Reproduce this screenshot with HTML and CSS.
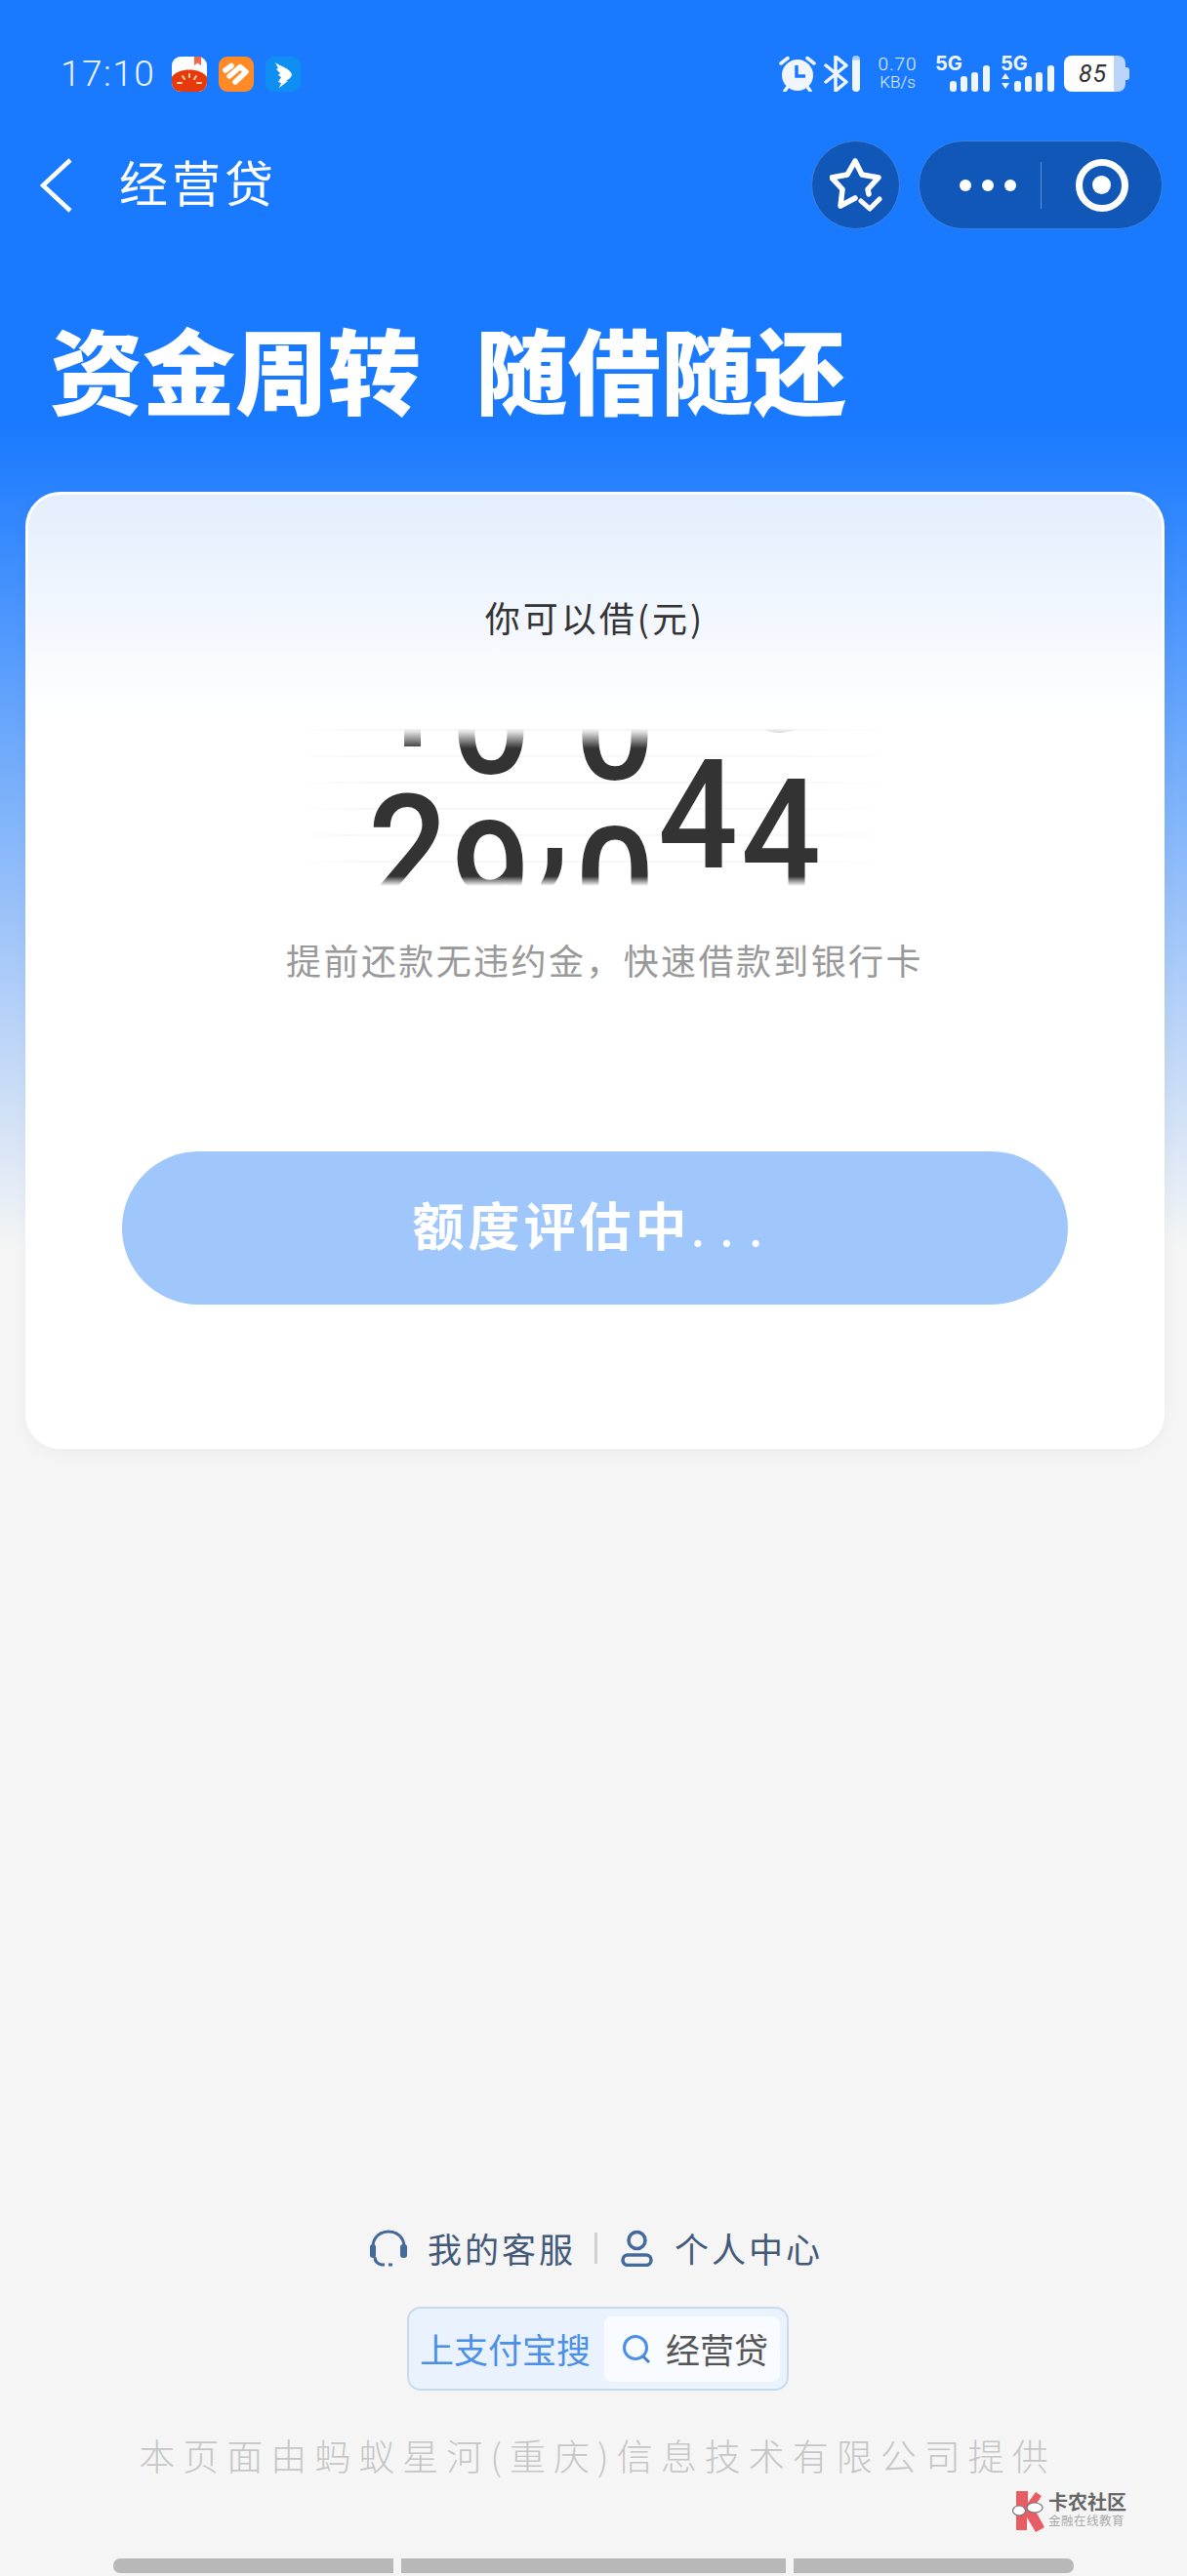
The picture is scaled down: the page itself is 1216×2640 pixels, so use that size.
FILE: index.html
```html
<!DOCTYPE html>
<html lang="zh-CN">
<head>
    <meta charset="UTF-8">
    <meta name="viewport" content="width=device-width, initial-scale=1.0">
    <title>经营贷</title>
    <link rel="stylesheet" href="styles.css">
</head>
<body>
    <div class="page">
        <div class="status-bar">
            <div class="status-left">
                <span class="time">17:10</span>
                <svg class="app-icon" viewBox="0 0 36 36">
                    <rect width="36" height="36" rx="9" fill="#fff"/>
                    <path d="M0 21 C6 11 30 11 36 21 V27 A9 9 0 0 1 27 36 H9 A9 9 0 0 1 0 27 Z" fill="#e63a0c"/>
                    <path d="M23 0 H30 V9 L26.500 6.500 L23 9 Z" fill="#ee6a4a"/>
                    <path d="M18 18 V21 M11 20 L13 23 M25 20 L23 23 M6 27 H10 M26 27 H30" stroke="#ffd9a8" stroke-width="2" stroke-linecap="round"/>
                </svg>
                <svg class="app-icon" viewBox="0 0 36 36">
                    <rect width="36" height="36" rx="9" fill="#ff8a26"/>
                    <path d="M7 14 L13 9.500" stroke="#fff" stroke-width="5.500" stroke-linecap="round"/>
                    <path d="M11 20 L22 10.500 L28 15.500 L17 26" fill="none" stroke="#fff" stroke-width="5.500" stroke-linecap="round" stroke-linejoin="round"/>
                </svg>
                <svg class="app-icon" viewBox="0 0 36 36">
                    <rect width="36" height="36" rx="9" fill="#0f8ff2"/>
                    <path d="M10 6 C15 10 25 12 27 18 C27 21 24 23 21 25 L23 25 L14 32 L16 27 L13 26 L16 21 L13 19 L15 17 L11 13 L13 12 Z" fill="#fff"/>
                </svg>
            </div>
            <div class="status-right">
                <svg class="alarm" viewBox="0 0 38 37">
                    <circle cx="19" cy="20" r="16" fill="#f1f6fe"/>
                    <path d="M2 8 L9 2.500 M36 8 L29 2.500 M6 36 L9 32 M32 36 L29 32" stroke="#f1f6fe" stroke-width="3.500" stroke-linecap="round"/>
                    <path d="M18 10 V21 H27" fill="none" stroke="#1a7aff" stroke-width="3.500"/>
                </svg>
                <svg class="bluetooth" viewBox="0 0 25 37">
                    <path d="M2 10 L23 27 L12 36 V1 L23 10 L2 27" fill="none" stroke="#f1f6fe" stroke-width="3.500" stroke-linejoin="round" stroke-linecap="round"/>
                </svg>
                <div class="vibrate-bar"></div>
                <div class="speed">
                    <span class="speed-num">0.70</span>
                    <span class="speed-unit">KB/s</span>
                </div>
                <div class="signal">
                    <span class="net">5G</span>
                    <svg class="bars" viewBox="0 0 56 27">
                        <rect x="15" y="16" width="7" height="11" rx="3" fill="#f1f6fe"/>
                        <rect x="26" y="11" width="7" height="16" rx="3" fill="#f1f6fe"/>
                        <rect x="37" y="7" width="7" height="20" rx="3" fill="#f1f6fe"/>
                        <rect x="49" y="0" width="7" height="27" rx="3" fill="#f1f6fe"/>
                    </svg>
                </div>
                <div class="signal">
                    <span class="net">5G</span>
                    <svg class="bars" viewBox="0 0 56 27">
                        <path d="M1 11 L5 5 L9 11 Z M1 15 H9 L5 21 Z" fill="#f1f6fe" transform="translate(0 3)"/>
                        <rect x="14" y="16" width="7" height="11" rx="3" fill="#f1f6fe"/>
                        <rect x="25" y="11" width="7" height="16" rx="3" fill="#f1f6fe"/>
                        <rect x="36" y="7" width="7" height="20" rx="3" fill="#f1f6fe"/>
                        <rect x="48" y="0" width="7" height="27" rx="3" fill="#f1f6fe"/>
                    </svg>
                </div>
                <div class="battery"><span>85</span></div>
            </div>
        </div>

        <div class="nav">
            <div class="nav-left">
                <svg class="back" viewBox="0 0 34 56">
                    <path d="M31 2 L3 28 L31 54" fill="none" stroke="#fff" stroke-width="4.500"/>
                </svg>
                <span class="nav-title">经营贷</span>
            </div>
            <div class="nav-right">
                <div class="star-btn">
                    <svg viewBox="0 0 54 56">
                        <path d="M26 41 L11 49 L13 32 L2 20 L18 17 L26 3 L33 17 L50 20 L39 32 L40 37" fill="none" stroke="#fff" stroke-width="5.500" stroke-linejoin="round" stroke-linecap="round"/>
                        <path d="M32 44 L41 52 L51 42" fill="none" stroke="#fff" stroke-width="5" stroke-linecap="round" stroke-linejoin="round"/>
                    </svg>
                </div>
                <div class="capsule">
                    <div class="capsule-more">
                        <span class="dot"></span><span class="dot"></span><span class="dot"></span>
                    </div>
                    <div class="capsule-line"></div>
                    <div class="capsule-close">
                        <span class="ring"></span>
                    </div>
                </div>
            </div>
        </div>

        <h1 class="headline"><span>资金周转</span><span>随借随还</span></h1>

        <div class="card">
            <div class="card-label">你可以借(元)</div>
            <div class="amount">
                <div class="amount-window">
                    <div class="reel reel-a"><span>1</span><span>2</span></div>
                    <div class="reel reel-b"><span>0</span><span>9</span></div>
                    <div class="reel reel-comma"><span>,</span></div>
                    <div class="reel reel-c"><span>0</span><span>0</span></div>
                    <div class="reel reel-d"><span>4</span></div>
                    <div class="reel reel-e"><span>3</span><span>4</span></div>
                </div>
            </div>
            <div class="card-sub">提前还款无违约金，快速借款到银行卡</div>
            <div class="submit-btn">额度评估中<span class="dots">...</span></div>
        </div>

        <div class="footer">
            <div class="footer-links">
                <svg class="headset" viewBox="0 0 40 38">
                    <path d="M4 18 C4 8 11 2 20 2 C29 2 36 8 36 18" fill="none" stroke="#44699b" stroke-width="3"/>
                    <rect x="1" y="15" width="6" height="14" rx="3" fill="#44699b"/>
                    <rect x="32" y="15" width="7" height="14" rx="3" fill="#44699b"/>
                    <path d="M6 28 C6 32 8 35 13 36 H16 M20 36 H24" fill="none" stroke="#44699b" stroke-width="3"/>
                </svg>
                <span class="link-text">我的客服</span>
                <span class="link-line"></span>
                <svg class="person" viewBox="0 0 33 38">
                    <circle cx="16.500" cy="11" r="8.500" fill="none" stroke="#44699b" stroke-width="3.500"/>
                    <rect x="2" y="26" width="29" height="10.500" rx="5.200" fill="none" stroke="#44699b" stroke-width="3.500"/>
                </svg>
                <span class="link-text">个人中心</span>
            </div>
            <div class="search-chip">
                <span class="chip-tip">上支付宝搜</span>
                <div class="chip-box">
                    <svg class="chip-icon" viewBox="0 0 30 30">
                        <circle cx="14" cy="14" r="11.500" fill="none" stroke="#4b8fe6" stroke-width="3"/>
                        <path d="M22 23 L28 29" stroke="#4a7fc4" stroke-width="3"/>
                    </svg>
                    <span class="chip-word">经营贷</span>
                </div>
            </div>
            <div class="provider">本页面由蚂蚁星河(重庆)信息技术有限公司提供</div>
            <div class="home-bars">
                <span class="home-bar"></span><span class="home-bar"></span><span class="home-bar"></span>
            </div>
        </div>

        <div class="watermark">
            <svg class="watermark-logo" viewBox="0 0 34 42">
                <path d="M4 0 H16 V12 L24 1 L30 5 L22 17 L33 37 L24 42 L15 27 V40 H4 Z" fill="#e85d64"/>
                <ellipse cx="7" cy="20" rx="6.500" ry="5" fill="#fff" stroke="#777" stroke-width="1.200"/>
                <ellipse cx="23" cy="17" rx="8" ry="5" fill="#fff" stroke="#777" stroke-width="1.200"/>
            </svg>
            <div class="watermark-text">
                <span class="watermark-name">卡农社区</span>
                <span class="watermark-sub">金融在线教育</span>
            </div>
        </div>
    </div>
</body>
</html>
```

FILE: styles.css
```css
* {
    box-sizing: border-box;
}

body {
    margin: 0;
    font-family: "Noto Sans CJK SC", "Noto Sans", sans-serif;
    color: #333;
}

.page {
    position: relative;
    width: 1216px;
    height: 2640px;
    display: flex;
    flex-direction: column;
    overflow: hidden;
    background: linear-gradient(180deg, #1a7aff 0, #1a7aff 440px, #f5f5f5 1280px, #f5f5f5 100%);
}

/* status bar */
.status-bar {
    display: flex;
    justify-content: space-between;
    height: 37px;
    margin-top: 57px;
    padding: 0 63px 0 62px;
}

.status-left,
.status-right {
    display: flex;
    align-items: center;
}

.time {
    width: 114px;
    font-family: Roboto, sans-serif;
    font-weight: 300;
    font-size: 37px;
    line-height: 37px;
    letter-spacing: 1.500px;
    color: #eef5ff;
}

.app-icon {
    width: 36px;
    height: 36px;
    margin-right: 12px;
}

.alarm {
    width: 38px;
    height: 37px;
    margin-right: 8px;
}

.bluetooth {
    width: 25px;
    height: 37px;
    margin-right: 4px;
}

.vibrate-bar {
    width: 8px;
    height: 37px;
    border-radius: 4px;
    background: linear-gradient(180deg, #a8cdfa 0, #a8cdfa 4px, #f1f6fe 5px);
    margin-right: 17px;
}

.speed {
    display: flex;
    flex-direction: column;
    align-items: center;
    width: 43px;
    margin-right: 17px;
    color: #e6f0ff;
    font-family: Roboto, sans-serif;
    font-weight: 300;
}

.speed-num {
    font-size: 19px;
    line-height: 18px;
    letter-spacing: 1px;
    white-space: nowrap;
}

.speed-unit {
    font-size: 17px;
    line-height: 19px;
    white-space: nowrap;
}

.signal {
    position: relative;
    width: 56px;
    height: 37px;
    margin-right: 11px;
    display: flex;
    align-items: flex-end;
}

.net {
    position: absolute;
    left: 0;
    top: -3px;
    font-family: Inter, sans-serif;
    font-size: 20px;
    line-height: 22px;
    font-weight: 700;
    color: #f1f6fe;
}

.bars {
    width: 56px;
    height: 27px;
}

.battery {
    position: relative;
    width: 63px;
    height: 37px;
    margin-left: -2px;
    border-radius: 8px;
    background: linear-gradient(90deg, #fff 0, #fff 81%, #bcd4f7 81%);
    display: flex;
    align-items: center;
    padding-left: 15px;
}

.battery::after {
    content: "";
    position: absolute;
    right: -4px;
    top: 12px;
    width: 4px;
    height: 13px;
    border-radius: 0 3px 3px 0;
    background: #bcd4f7;
}

.battery span {
    font-family: Roboto, sans-serif;
    font-style: italic;
    font-size: 25px;
    letter-spacing: 1px;
    color: #333;
}

/* nav */
.nav {
    display: flex;
    justify-content: space-between;
    align-items: center;
    height: 91px;
    margin-top: 50px;
    padding: 0 25px 0 41px;
}

.nav-left,
.nav-right {
    display: flex;
    align-items: center;
}

.back {
    width: 34px;
    height: 56px;
}

.nav-title {
    margin: -10px 0 0 47px;
    font-size: 50px;
    line-height: 56px;
    letter-spacing: 4px;
    color: #fff;
}

.star-btn {
    width: 91px;
    height: 91px;
    margin-right: 19px;
    border-radius: 50%;
    background: #1057b8;
    border: 1px solid #3d82e2;
    display: flex;
    align-items: center;
    justify-content: center;
}

.star-btn svg {
    width: 54px;
    height: 56px;
}

.capsule {
    width: 250px;
    height: 91px;
    border-radius: 46px;
    background: #1057b8;
    border: 1px solid #3d82e2;
    display: flex;
    align-items: center;
}

.capsule-more {
    display: flex;
    gap: 11px;
    padding-left: 41px;
    width: 124px;
}

.dot {
    width: 12px;
    height: 12px;
    border-radius: 50%;
    background: #fff;
}

.capsule-line {
    width: 1px;
    height: 48px;
    background: #5c93dd;
}

.capsule-close {
    flex: 1;
    display: flex;
    align-items: center;
    justify-content: center;
}

.ring {
    width: 54px;
    height: 54px;
    border-radius: 50%;
    border: 7px solid #fff;
    display: flex;
    align-items: center;
    justify-content: center;
}

.ring::after {
    content: "";
    width: 19px;
    height: 19px;
    border-radius: 50%;
    background: #fff;
}

/* headline */
.headline {
    display: flex;
    gap: 56px;
    margin: 90px 0 0 51px;
    font-size: 95px;
    line-height: 104px;
    font-weight: 900;
    color: #fff;
}

/* card */
.card {
    display: flex;
    flex-direction: column;
    align-items: center;
    width: 1167px;
    height: 981px;
    margin: 75px 0 0 26px;
    padding-top: 105px;
    border: 3px solid #fff;
    border-radius: 36px;
    background: linear-gradient(180deg, #e3eefd 0, #ffffff 230px);
    box-shadow: 0 4px 16px rgba(0, 0, 0, 0.04);
}

.card-label {
    font-size: 36px;
    line-height: 40px;
    letter-spacing: 3px;
    color: #333;
}

.amount {
    position: relative;
    margin-top: 95px;
    width: 610px;
    display: flex;
    justify-content: center;
}

.amount::before {
    content: "";
    position: absolute;
    inset: 0;
    background: repeating-linear-gradient(180deg, #f7f7f7 0, #f7f7f7 2px, transparent 2px, transparent 27px);
    -webkit-mask-image: linear-gradient(90deg, transparent, #000 12%, #000 80%, transparent);
    mask-image: linear-gradient(90deg, transparent, #000 12%, #000 80%, transparent);
}

.amount-window {
    position: relative;
    display: flex;
    height: 161px;
    overflow: hidden;
    font-family: Roboto, sans-serif;
    font-size: 155px;
    font-weight: 500;
    color: #333;
    -webkit-mask-image: linear-gradient(180deg, transparent 0, #000 20px, #000 151px, transparent 100%);
    mask-image: linear-gradient(180deg, transparent 0, #000 20px, #000 151px, transparent 100%);
}

.reel {
    display: flex;
    flex-direction: column;
    align-items: center;
    width: 85px;
}

.reel span {
    display: block;
    height: 160px;
    line-height: 160px;
    transform: scaleX(0.93);
}

.reel-a { margin-top: -115px; }
.reel-b { margin-top: -88px; }
.reel-comma { margin-top: 7px; width: 42px; }
.reel-c { margin-top: -82px; }
.reel-d { margin-top: 9px; }
.reel-e { margin-top: -131px; }

.card-sub {
    margin: 55px 0 0 20px;
    font-size: 36px;
    line-height: 40px;
    letter-spacing: 2.400px;
    color: #999;
}

.submit-btn {
    width: 969px;
    height: 157px;
    margin-top: 177px;
    border-radius: 79px;
    background: #a0c7fb;
    color: #fff;
    font-size: 53px;
    font-weight: 700;
    letter-spacing: 4px;
    line-height: 149px;
    text-align: center;
}

.dots {
    font-weight: 400;
    letter-spacing: 15px;
}

/* footer */
.footer {
    margin-top: auto;
    padding-bottom: 3px;
    display: flex;
    flex-direction: column;
    align-items: center;
}

.footer-links {
    display: flex;
    align-items: center;
    height: 40px;
    margin-left: 5px;
    color: #43597a;
}

.headset {
    width: 40px;
    height: 38px;
    margin-right: 20px;
}

.person {
    width: 33px;
    height: 38px;
    margin-right: 22px;
}

.link-text {
    font-size: 35px;
    line-height: 40px;
    letter-spacing: 3px;
    white-space: nowrap;
}

.link-line {
    width: 3px;
    height: 32px;
    margin: 0 24px 0 19px;
    background: #d2d2d2;
}

.search-chip {
    display: flex;
    align-items: center;
    width: 391px;
    height: 86px;
    margin: 40px 0 0 9px;
    padding-left: 11px;
    border: 2px solid #c8daf0;
    border-radius: 14px;
    background: #eaf3fd;
}

.chip-tip {
    font-size: 35px;
    line-height: 40px;
    white-space: nowrap;
    color: #4b8fe6;
}

.chip-box {
    display: flex;
    align-items: center;
    width: 180px;
    height: 67px;
    margin-left: 14px;
    padding-left: 18px;
    border-radius: 8px;
    background: #f8fbff;
}

.chip-icon {
    width: 30px;
    height: 30px;
    margin-right: 15px;
}

.chip-word {
    font-size: 35px;
    line-height: 40px;
    white-space: nowrap;
    color: #555;
}

.provider {
    margin: 46px 0 0 8px;
    font-size: 37px;
    font-weight: 300;
    line-height: 40px;
    letter-spacing: 8px;
    white-space: nowrap;
    color: #c6c6c6;
}

.home-bars {
    display: flex;
    gap: 8px;
    margin-top: 86px;
}

.home-bar {
    width: 287px;
    height: 15px;
    background: #b8b8b8;
}

.home-bar:nth-child(2) {
    width: 394px;
}

.home-bar:first-child {
    border-radius: 7px 0 0 7px;
}

.home-bar:last-child {
    border-radius: 0 7px 7px 0;
}

/* watermark over the page corner */
.watermark {
    position: absolute;
    left: 1037px;
    top: 2553px;
    display: flex;
    gap: 3px;
}

.watermark-logo {
    width: 34px;
    height: 42px;
}

.watermark-text {
    display: flex;
    flex-direction: column;
}

.watermark-name {
    font-size: 20px;
    line-height: 22px;
    font-weight: 700;
    color: #666;
    white-space: nowrap;
}

.watermark-sub {
    font-size: 12.500px;
    line-height: 16px;
    letter-spacing: 0.500px;
    color: #aaa;
    white-space: nowrap;
}
```
